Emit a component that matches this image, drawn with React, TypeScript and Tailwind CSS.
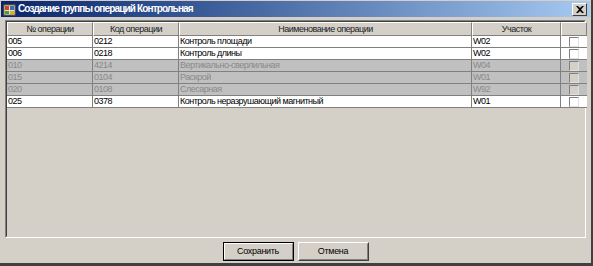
import React from "react";

type Row = { num: string; code: string; name: string; area: string; enabled: boolean };

const rows: Row[] = [
  { num: "005", code: "0212", name: "Контроль площади", area: "W02", enabled: true },
  { num: "006", code: "0218", name: "Контроль длины", area: "W02", enabled: true },
  { num: "010", code: "4214", name: "Вертикально-сверлильная", area: "W04", enabled: false },
  { num: "015", code: "0104", name: "Раскрой", area: "W01", enabled: false },
  { num: "020", code: "0108", name: "Слесарная", area: "W92", enabled: false },
  { num: "025", code: "0378", name: "Контроль неразрушающий магнитный", area: "W01", enabled: true },
];

const cols = "grid grid-cols-[86px_86px_293px_89px_26px]";

function HeaderCell({ children }: { children?: React.ReactNode }) {
  return (
    <div className="h-[14px] flex items-center justify-center border-t border-l border-t-white border-l-white border-r border-b border-r-[#808080] border-b-[#808080] bg-[#d4d0c8] text-[#202020]">
      {children}
    </div>
  );
}

function Cell({ children, enabled }: { children?: React.ReactNode; enabled: boolean }) {
  return (
    <div
      className={
        "h-[12px] flex items-center pl-[1px] border-r border-b border-[#808080] overflow-hidden whitespace-nowrap " +
        (enabled ? "bg-white text-black" : "bg-[#c0c0c0] text-[#8a8a8a]")
      }
    >
      {children}
    </div>
  );
}

function Check({ enabled }: { enabled: boolean }) {
  return (
    <div
      className={
        "h-[12px] flex items-center justify-center border-b border-[#808080] " +
        (enabled ? "bg-white" : "bg-[#c0c0c0]")
      }
    >
      <div
        className={
          "w-[10px] h-[10px] border border-t-[#808080] border-l-[#808080] border-r-[#e0e0e0] border-b-[#e0e0e0] " +
          (enabled ? "bg-white" : "bg-[#d4d0c8]")
        }
      />
    </div>
  );
}

export default function App() {
  return (
    <div
      className="w-[593px] h-[266px] bg-[#d4d0c8] flex flex-col border-r-2 border-b-[3px] border-r-[#404040] border-b-[#404040] text-[9px] leading-none"
      style={{ fontFamily: "'Liberation Sans', Arial, sans-serif" }}
    >
      {/* title bar */}
      <div className="h-[16px] mx-[1px] mt-[1px] flex items-center bg-gradient-to-r from-[#0a246a] to-[#a6caf0]">
        <div className="ml-[2px] w-[13px] h-[13px] flex items-center justify-center">
          <svg width="13" height="13" viewBox="0 0 13 13">
            <rect x="1" y="2" width="11" height="10" fill="#e8e0c8" stroke="#7a6a40" strokeWidth="1" />
            <rect x="2" y="3" width="4" height="4" fill="#d84020" />
            <rect x="7" y="3" width="4" height="4" fill="#3070c0" />
            <rect x="2" y="8" width="4" height="3" fill="#40a040" />
            <rect x="7" y="8" width="4" height="3" fill="#e0b020" />
          </svg>
        </div>
        <span className="ml-[2px] text-white font-bold text-[10px] tracking-[-0.85px]">
          Создание группы операций Контрольная
        </span>
        <div className="ml-auto mr-[3px] w-[15px] h-[13px] bg-[#d4d0c8] border border-t-white border-l-white border-r-[#404040] border-b-[#404040] flex items-center justify-center">
          <svg width="8" height="7" viewBox="0 0 8 7">
            <path d="M0 0h2l2 2 2-2h2L5 3.5 8 7H6L4 5 2 7H0l3-3.5z" fill="#000" />
          </svg>
        </div>
      </div>

      {/* table panel */}
      <div className="flex-1 flex flex-col px-[5px] pt-[3px]">
        <div className="h-[218px] border border-t-[#808080] border-l-[#808080] border-r-white border-b-white">
          <div className="h-full border border-t-[#404040] border-l-[#404040] border-r-[#d4d0c8] border-b-[#d4d0c8] bg-[#d4d0c8] tracking-[-0.5px]">
            <div className={cols}>
              <HeaderCell>№ операции</HeaderCell>
              <HeaderCell>Код операции</HeaderCell>
              <HeaderCell>Наименование операции</HeaderCell>
              <HeaderCell>Участок</HeaderCell>
              <HeaderCell />
            </div>
            {rows.map((r) => (
              <div key={r.num} className={cols}>
                <Cell enabled={r.enabled}>{r.num}</Cell>
                <Cell enabled={r.enabled}>{r.code}</Cell>
                <Cell enabled={r.enabled}>{r.name}</Cell>
                <Cell enabled={r.enabled}>{r.area}</Cell>
                <Check enabled={r.enabled} />
              </div>
            ))}
          </div>
        </div>

        {/* buttons */}
        <div className="flex justify-center gap-[4px] pt-[4px] tracking-[-0.3px]">
          <button className="w-[71px] h-[19px] bg-[#d4d0c8] border border-black text-black">
            <div className="h-full border border-t-white border-l-white border-r-[#808080] border-b-[#808080] flex items-center justify-center">
              Сохранить
            </div>
          </button>
          <button className="w-[71px] h-[19px] bg-[#d4d0c8] border border-t-white border-l-white border-r-[#404040] border-b-[#404040] text-black">
            <div className="h-full border border-r-[#808080] border-b-[#808080] border-t-transparent border-l-transparent flex items-center justify-center">
              Отмена
            </div>
          </button>
        </div>
      </div>
    </div>
  );
}
